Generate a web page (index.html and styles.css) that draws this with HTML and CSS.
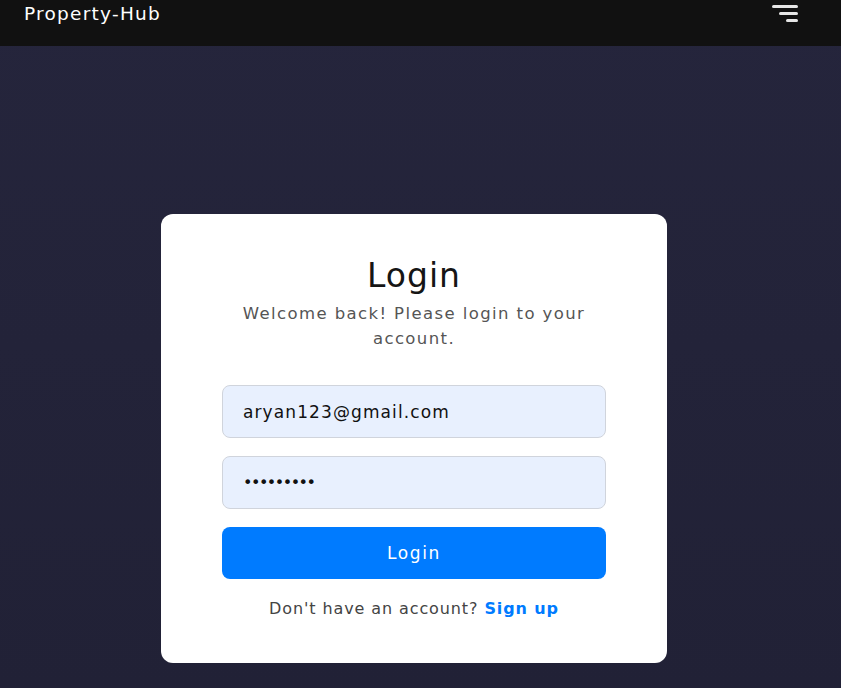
FILE: index.html
```html
<!DOCTYPE html>
<html lang="en">
<head>
<meta charset="utf-8">
<title>Property-Hub Login</title>
<link rel="stylesheet" href="styles.css">
</head>
<body>
<header class="topbar">
  <div class="brand">Property-Hub</div>
  <button class="menu" aria-label="Menu">
    <svg width="28" height="24" viewBox="0 0 28 24">
      <rect x="0" y="5" width="26" height="3" rx="1.5" fill="#e6e6e6"/>
      <rect x="7" y="12" width="19" height="3" rx="1.5" fill="#e6e6e6"/>
      <rect x="14" y="19" width="12" height="3" rx="1.5" fill="#e6e6e6"/>
    </svg>
  </button>
</header>
<main class="page">
  <div class="card">
    <h1 class="title">Login</h1>
    <p class="subtitle">Welcome back! Please login to your account.</p>
    <form class="form">
      <input class="field" type="email" value="aryan123@gmail.com">
      <input class="field field-pass" type="password" value="123456789">
      <button class="submit" type="button">Login</button>
    </form>
    <p class="footer">Don't have an account? <a href="#" class="link">Sign up</a></p>
  </div>
</main>
</body>
</html>
```
FILE: styles.css
```css
* { box-sizing: border-box; }
html, body { margin: 0; height: 100%; }
body {
  font-family: "DejaVu Sans", "Open Sans", sans-serif;
  background: linear-gradient(180deg, #25253c 0%, #212136 100%);
  overflow: hidden;
}
.topbar {
  height: 46px;
  background: #111111;
  display: flex;
  justify-content: space-between;
  align-items: flex-start;
  padding: 0 41px 0 24px;
}
.brand {
  color: #ffffff;
  font-size: 18.5px;
  letter-spacing: 1.25px;
  line-height: 28px;
}
.menu {
  background: none;
  border: 0;
  padding: 0;
  width: 28px;
  height: 24px;
  display: block;
}
.menu svg { display: block; }
.page {
  display: flex;
  justify-content: center;
  padding-top: 168px;
}
.card {
  width: 506px;
  height: 449px;
  margin-left: -13px;
  background: #ffffff;
  border-radius: 12px;
  padding: 38px 61px 0;
  text-align: center;
}
.title {
  margin: 0;
  font-size: 33px;
  font-weight: 500;
  letter-spacing: 1px;
  line-height: 48px;
  color: #151515;
}
.subtitle {
  margin: 1px 0 0;
  font-size: 16.5px;
  letter-spacing: 1.4px;
  line-height: 25px;
  color: #555555;
  padding: 0 2px;
}
.form {
  display: flex;
  flex-direction: column;
  gap: 18px;
  margin-top: 34px;
}
.field {
  height: 53px;
  width: 100%;
  border: 1px solid #d0d4dc;
  border-radius: 8px;
  background: #e8f0fe;
  padding: 0 20px;
  font-family: inherit;
  font-size: 17px;
  letter-spacing: 1.1px;
  color: #111;
}
.field-pass {
  font-size: 16px;
  letter-spacing: -1.5px;
}
.submit {
  height: 52px;
  border: 0;
  border-radius: 8px;
  background: #007bff;
  color: #ffffff;
  font-family: inherit;
  font-size: 17px;
  letter-spacing: 1.6px;
}
.footer {
  margin: 18px 0 0;
  font-size: 16px;
  letter-spacing: 0.9px;
  line-height: 24px;
  color: #444444;
}
.link {
  color: #007bff;
  font-weight: bold;
  text-decoration: none;
}
```
